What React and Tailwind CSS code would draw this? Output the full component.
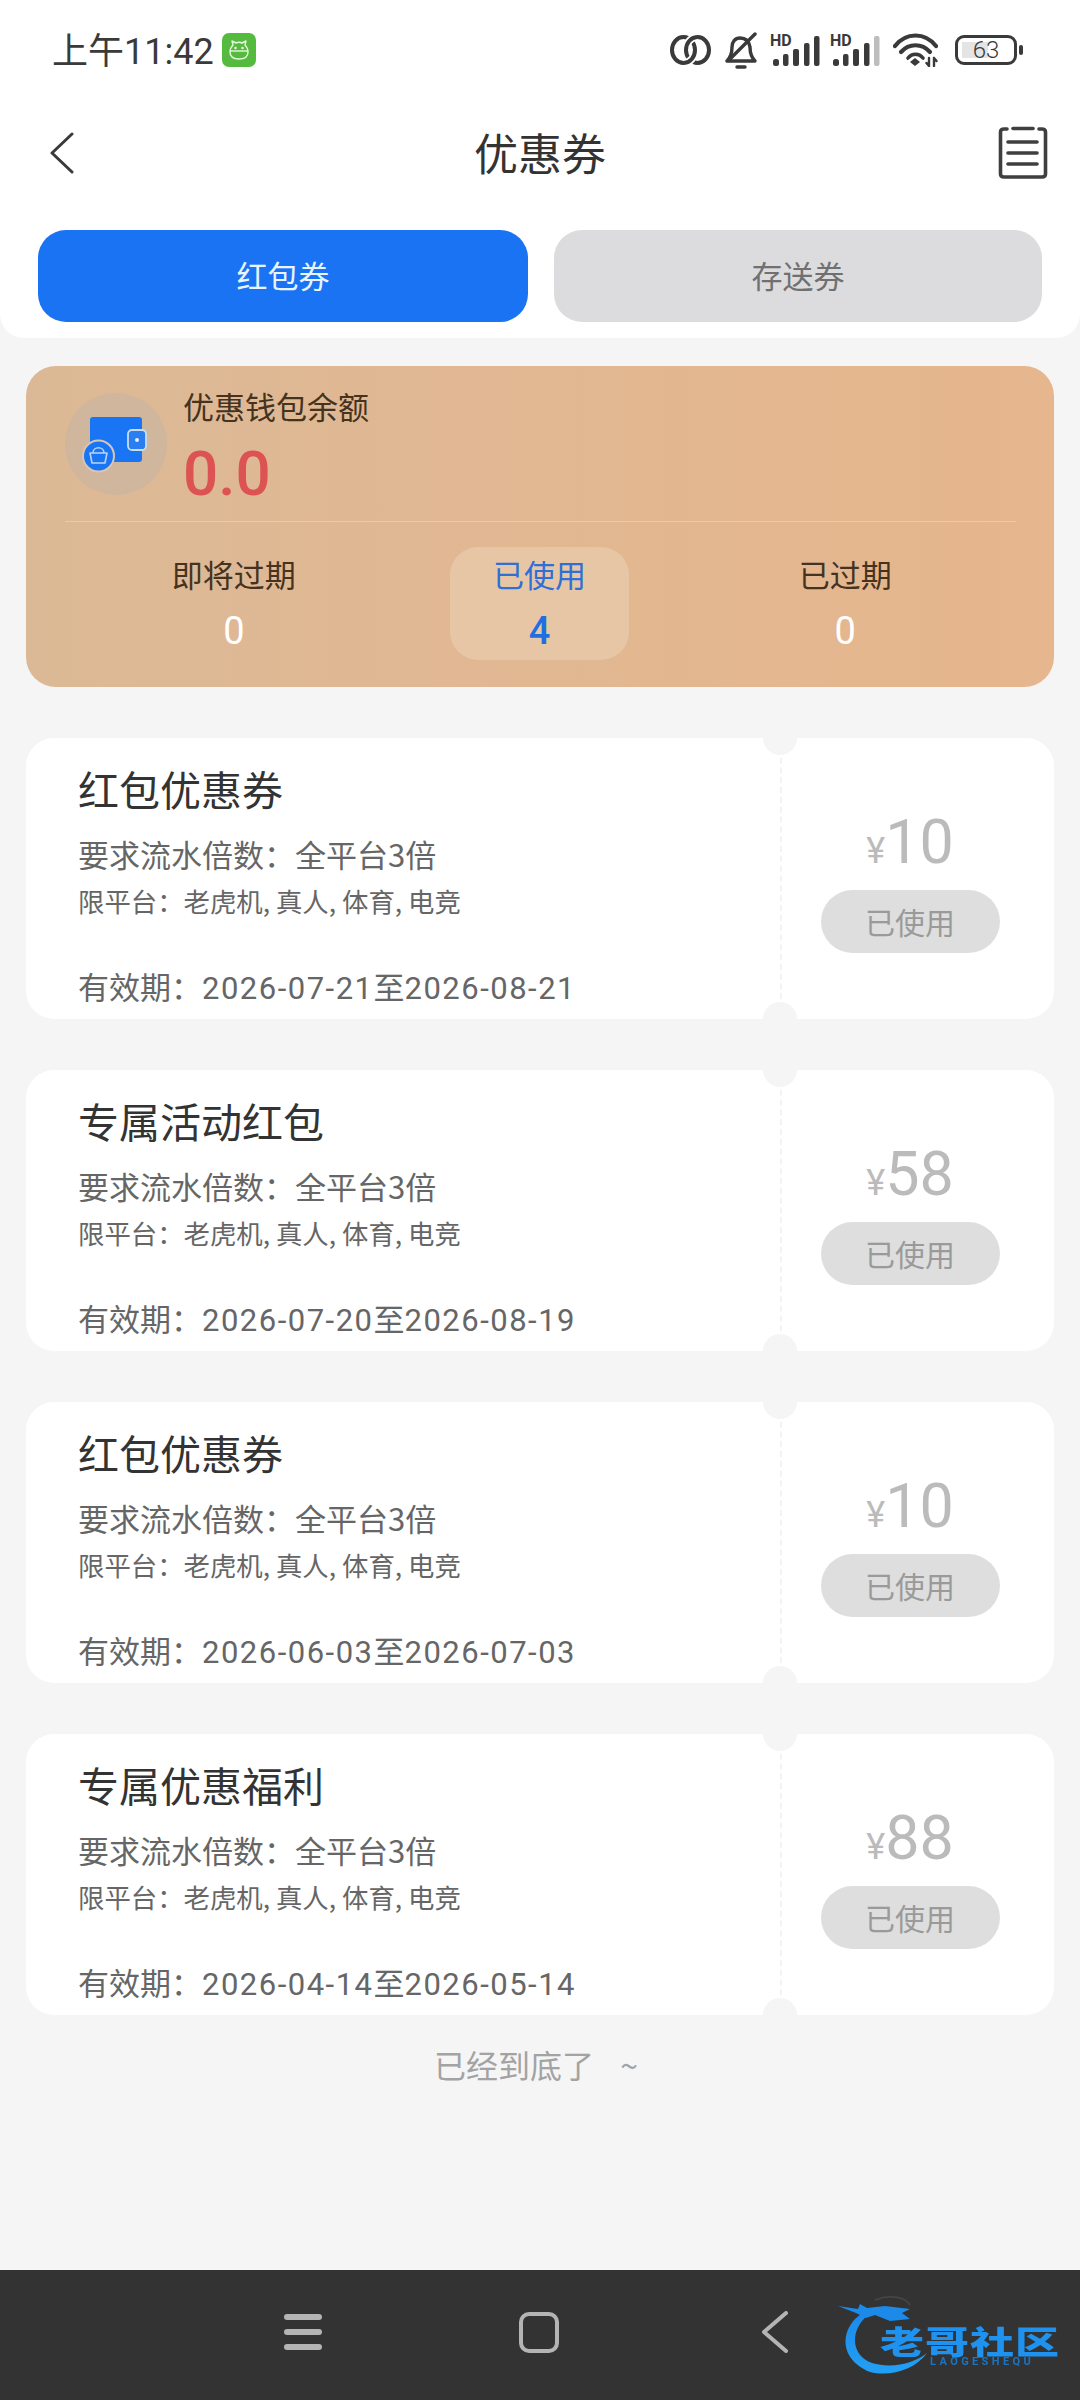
import React from 'react';

const coupons = [
  { title: '红包优惠券', amount: '10', date: '2026-07-21至2026-08-21' },
  { title: '专属活动红包', amount: '58', date: '2026-07-20至2026-08-19' },
  { title: '红包优惠券', amount: '10', date: '2026-06-03至2026-07-03' },
  { title: '专属优惠福利', amount: '88', date: '2026-04-14至2026-05-14' },
];

function SignalIcon({ dim }) {
  return (
    <svg className="-mt-[4px]" width="50" height="36" viewBox="0 -4 50 36" fill="currentColor">
      <text x="0" y="12" fontSize="16" fontWeight="700" fontFamily="Roboto, sans-serif">HD</text>
      <rect x="3" y="25" width="6" height="7" rx="2.5" />
      <rect x="13" y="20" width="5.5" height="12" rx="2" />
      <rect x="23" y="15" width="6" height="17" rx="2" />
      <rect x="34" y="9" width="5.5" height="23" rx="2" />
      <rect x="44" y="2" width="5.5" height="30" rx="2" fill={dim ? '#bdbdbd' : 'currentColor'} />
    </svg>
  );
}

function StatusIcons() {
  return (
    <div className="flex items-center text-[#3a3a3a]">
      {/* linked rings, each crossing redrawn with a white halo */}
      <svg width="41" height="30" viewBox="0 0 41 30" fill="none" stroke="currentColor" strokeWidth="4">
        <ellipse cx="13.500" cy="15" rx="11.500" ry="13" />
        <ellipse cx="27.500" cy="15" rx="11.500" ry="13" />
        <path d="M27 2A11.500 13 0 0 0 16 15" stroke="#ffffff" strokeWidth="7.500" />
        <path d="M27 2A11.500 13 0 0 0 16 15" />
        <path d="M14 28A11.500 13 0 0 0 25 15" stroke="#ffffff" strokeWidth="7.500" />
        <path d="M14 28A11.500 13 0 0 0 25 15" />
      </svg>
      {/* muted bell */}
      <svg className="ml-[14px]" width="32" height="37" viewBox="0 0 32 37" fill="none" stroke="currentColor" strokeWidth="3.4" strokeLinecap="round" strokeLinejoin="round">
        <path d="M2 29H30C26 25 25 21 25 15C24 9 20 6 15 6C10 6 7 10 7 15C7 21 6 25 2 29Z" />
        <path d="M12 35H20" />
        <path d="M4 28L30 2" />
      </svg>
      <div className="ml-[13px]"><SignalIcon /></div>
      <div className="ml-[10px]"><SignalIcon dim /></div>
      {/* wifi */}
      <svg className="ml-[13px]" width="45" height="34" viewBox="0 0 45 34" fill="none" stroke="currentColor" strokeWidth="4.2" strokeLinecap="round">
        <path d="M2 13C13 -1 32 -1 43 13" />
        <path d="M8 19C16 10 29 10 37 19" />
        <path d="M15 25C19 20 26 20 30 25" strokeWidth="3.6" />
        <path d="M22 25L27 29L22 33L17 29Z" fill="currentColor" stroke="none" />
        <path d="M36 25V33M33.5 30L36 33M41 25V33M41 25L43.5 28" strokeWidth="2.4" />
      </svg>
      {/* battery */}
      <div className="ml-[17px] flex items-center">
        <div className="relative w-[62px] h-[30px] rounded-[9px] border-[3px] border-[#3a3a3a] p-[4px]">
          <div className="h-full w-[26px] bg-[#e4e4e4]" />
          <span className="absolute inset-0 flex items-center justify-center text-[24px] leading-none font-light font-['Roboto',sans-serif]">63</span>
        </div>
        <div className="ml-[2px] w-[4px] h-[10px] rounded-[2px] bg-[#3a3a3a]" />
      </div>
    </div>
  );
}

function WalletBadge() {
  return (
    <svg className="shrink-0" width="102" height="102" viewBox="0 0 102 102" fill="none">
      <circle cx="51" cy="51" r="51" fill="#cfb69d" />
      <rect x="25" y="24" width="52" height="45" rx="3" fill="#1a75f5" />
      <rect x="63" y="37" width="18" height="20" rx="4" fill="#2a7ff0" stroke="#c9dcf2" strokeWidth="1.8" />
      <circle cx="72" cy="47" r="2" fill="#e6eefb" />
      <circle cx="33.5" cy="63" r="15.5" fill="#1a75f5" stroke="#d7c6b4" strokeWidth="2" />
      <path d="M25 60H42L40 70H27Z M28 60C28 53 39 53 39 60" stroke="#b9d3f5" strokeWidth="1.6" strokeLinejoin="round" />
    </svg>
  );
}

function Stat({ label, value, active }) {
  return (
    <div className="flex justify-center">
      <div className={active ? 'w-[179px] h-[113px] rounded-[28px] bg-[#e7c6a6] flex flex-col items-center pt-[6px]' : 'w-[179px] h-[113px] flex flex-col items-center pt-[6px]'}>
        <div className={active ? 'text-[31px] leading-[42px] text-[#2f6fd6]' : 'text-[31px] leading-[42px] text-[#45331f]'}>{label}</div>
        <div className={active ? "mt-[15px] text-[38px] leading-[42px] font-medium text-[#1f6fe0] font-['Roboto',sans-serif]" : "mt-[15px] text-[38px] leading-[42px] text-white font-['Roboto',sans-serif]"}>{value}</div>
      </div>
    </div>
  );
}

function CouponCard({ title, amount, date }) {
  return (
    <div className="relative h-[281px] rounded-[28px] bg-white flex overflow-hidden">
      <div className="w-[754px] pl-[52px] pt-[25px] pb-[10px] flex flex-col">
        <div className="text-[41px] leading-[50px] text-[#333333]">{title}</div>
        <div className="mt-[21px] text-[31px] leading-[40px] text-[#666666]">要求流水倍数：全平台3倍</div>
        <div className="mt-[10px] text-[26.4px] leading-[34px] text-[#666666]">限平台：老虎机, 真人, 体育, 电竞</div>
        <div className="mt-auto text-[31px] leading-[40px] text-[#666666]">有效期：<span className="tracking-[1.5px] font-['Roboto',sans-serif]">{date.slice(0, 10)}</span>至<span className="tracking-[1.5px] font-['Roboto',sans-serif]">{date.slice(11)}</span></div>
      </div>
      <div className="w-[258px] border-l-2 border-dashed border-[#f3f3f3] flex flex-col items-center pt-[68px]">
        <div className="h-[72px] flex items-baseline text-[#bbbbbb] font-['Roboto',sans-serif]">
          <span className="text-[36px] leading-[72px]">¥</span>
          <span className="text-[61px] leading-[72px]">{amount}</span>
        </div>
        <div className="mt-[12px] w-[179px] h-[63px] rounded-full bg-[#dedede] flex items-center justify-center text-[30px] text-[#9a9a9a]">已使用</div>
      </div>
      {/* ticket notches */}
      <div className="absolute left-[737px] top-[-17px] w-[34px] h-[34px] rounded-full bg-[#f5f5f5]" />
      <div className="absolute left-[737px] bottom-[-17px] w-[34px] h-[34px] rounded-full bg-[#f5f5f5]" />
    </div>
  );
}

function Logo() {
  return (
    <div className="absolute left-[830px] top-[15px] w-[240px] h-[100px] blur-[0.6px]">
      <svg className="absolute left-0 top-0" width="240" height="100" viewBox="0 0 240 100" fill="none">
        <defs>
          <linearGradient id="dragon" x1="0" y1="0" x2="0" y2="1">
            <stop offset="0" stopColor="#1c8ae8" />
            <stop offset="1" stopColor="#22a0f5" />
          </linearGradient>
        </defs>
        <path d="M45 15C60 9 75 12 80 20" stroke="#474747" strokeWidth="1.5" />
        <path d="M33 28C12 40 5 72 40 87C60 92 85 85 97 68C85 78 62 84 42 78C20 70 20 45 38 30Z" fill="url(#dragon)" />
        <path d="M8 21L28 24L30 19L37 23L55 21L80 24L72 28L80 34L60 36L45 30L36 33L26 28Z" fill="#1c8ae8" />
      </svg>
      <div className="absolute left-[50px] top-[37px] text-[44px] leading-[36px] tracking-[1px] scale-y-[0.72] font-black text-[#1e92ee] whitespace-nowrap">老哥社区</div>
      <div className="absolute left-[100px] top-[70px] text-[11px] leading-[14px] font-bold tracking-[3.4px] text-[#1a74c0] font-['Roboto',sans-serif]">LAOGESHEQU</div>
    </div>
  );
}

export default function App() {
  return (
    <div className="relative w-[1080px] h-[2400px] bg-[#f5f5f5] flex flex-col overflow-hidden font-['Noto_Sans_CJK_SC','Noto_Sans',sans-serif]">
      <div className="h-[338px] bg-white rounded-b-[24px] flex flex-col shrink-0">
        <div className="h-[100px] pl-[52px] pr-[57px] flex items-center justify-between">
          <div className="flex items-center">
            <span className="text-[36px] leading-none text-[#3a3a3a]">上午<span className="font-['Roboto',sans-serif]">11:42</span></span>
            <div className="ml-[8px] w-[34px] h-[34px] rounded-[7px] bg-[#55bb3f] flex items-center justify-center">
              <svg width="20" height="22" viewBox="0 0 20 22" fill="none" stroke="#e6f7df" strokeWidth="1.4" strokeLinejoin="round">
                <path d="M4 6L3 2L7 4C9 3 11 3 13 4L17 2L16 6C18 8 19 10 19 13C19 18 15 20 10 20C5 20 1 18 1 13C1 10 2 8 4 6Z" />
                <path d="M1 12H19" />
                <circle cx="6.5" cy="9" r="0.6" />
                <circle cx="13.5" cy="9" r="0.6" />
              </svg>
            </div>
          </div>
          <StatusIcons />
        </div>
        <div className="h-[106px] pl-[50px] pr-[32px] flex items-center justify-between relative">
          <svg width="24" height="42" viewBox="0 0 24 42" fill="none" stroke="#3a3a3a" strokeWidth="3" strokeLinecap="round" strokeLinejoin="round">
            <path d="M22 2L2 21L22 40" />
          </svg>
          <div className="absolute left-0 right-0 top-[22px] text-center text-[44px] leading-[60px] text-[#333333]">优惠券</div>
          <svg width="50" height="54" viewBox="0 0 50 54" fill="none" stroke="#3f3f3f" strokeLinecap="round" strokeWidth="3.6">
            <path d="M9 3H6C4 3 2.500 4 2.500 6V48C2.500 50 4 51 6 51H44C46 51 47.500 50 47.500 48V6C47.500 4 46 3 44 3H41" />
            <path d="M15 2.500H35" />
            <path d="M10 16H39M10 27H39M10 38H39" />
          </svg>
        </div>
        <div className="mt-[24px] pl-[38px] pr-[38px] flex gap-[26px]">
          <div className="w-[490px] h-[92px] rounded-[28px] bg-[#1a73f2] flex items-center justify-center pb-[2px] text-[31px] text-[#e8f4ff]">红包券</div>
          <div className="w-[488px] h-[92px] rounded-[28px] bg-[#dcdcde] flex items-center justify-center pb-[2px] text-[31px] text-[#707070]">存送券</div>
        </div>
      </div>

      <div className="mt-[28px] mx-[26px] h-[321px] rounded-[30px] bg-gradient-to-r from-[#dcb996] to-[#e6b68d] pl-[39px] pr-[38px] pt-[27px] shrink-0">
        <div className="flex h-[129px] border-b border-[#e9cbac]">
          <WalletBadge />
          <div className="ml-[16px] -mt-[5px] flex flex-col">
            <div className="text-[31px] leading-[36px] text-[#45331f]">优惠钱包余额</div>
            <div className="mt-[12px] text-[62px] leading-[76px] font-medium text-[#dd5252] font-['Roboto',sans-serif]">0.0</div>
          </div>
        </div>
        <div className="mt-[25px] ml-[16px] mr-[18px] grid grid-cols-3">
          <Stat label="即将过期" value="0" />
          <Stat label="已使用" value="4" active />
          <Stat label="已过期" value="0" />
        </div>
      </div>

      <div className="mt-[51px] mx-[26px] flex flex-col gap-[51px] shrink-0">
        {coupons.map((c, i) => <CouponCard key={i} {...c} />)}
      </div>

      <div className="mt-[27px] text-center text-[32px] leading-[44px] text-[#a3a3a3] pr-[8px]">已经到底了<span className="ml-[26px]">~</span></div>

      <div className="relative mt-auto h-[130px] bg-[#333333] flex items-center pl-[284px] pb-[6px] shrink-0">
        <div className="w-[38px] h-[36px] flex flex-col justify-between">
          <div className="h-[6px] rounded-full bg-[#b4b4b4]" />
          <div className="h-[6px] rounded-full bg-[#b4b4b4]" />
          <div className="h-[6px] rounded-full bg-[#b4b4b4]" />
        </div>
        <div className="ml-[197px] w-[40px] h-[41px] rounded-[10px] border-[4px] border-[#b4b4b4]" />
        <svg className="ml-[202px]" width="27" height="42" viewBox="0 0 27 42" fill="none" stroke="#b4b4b4" strokeWidth="4" strokeLinecap="round" strokeLinejoin="round">
          <path d="M25 2L3 21L25 40" />
        </svg>
        <Logo />
      </div>
    </div>
  );
}
